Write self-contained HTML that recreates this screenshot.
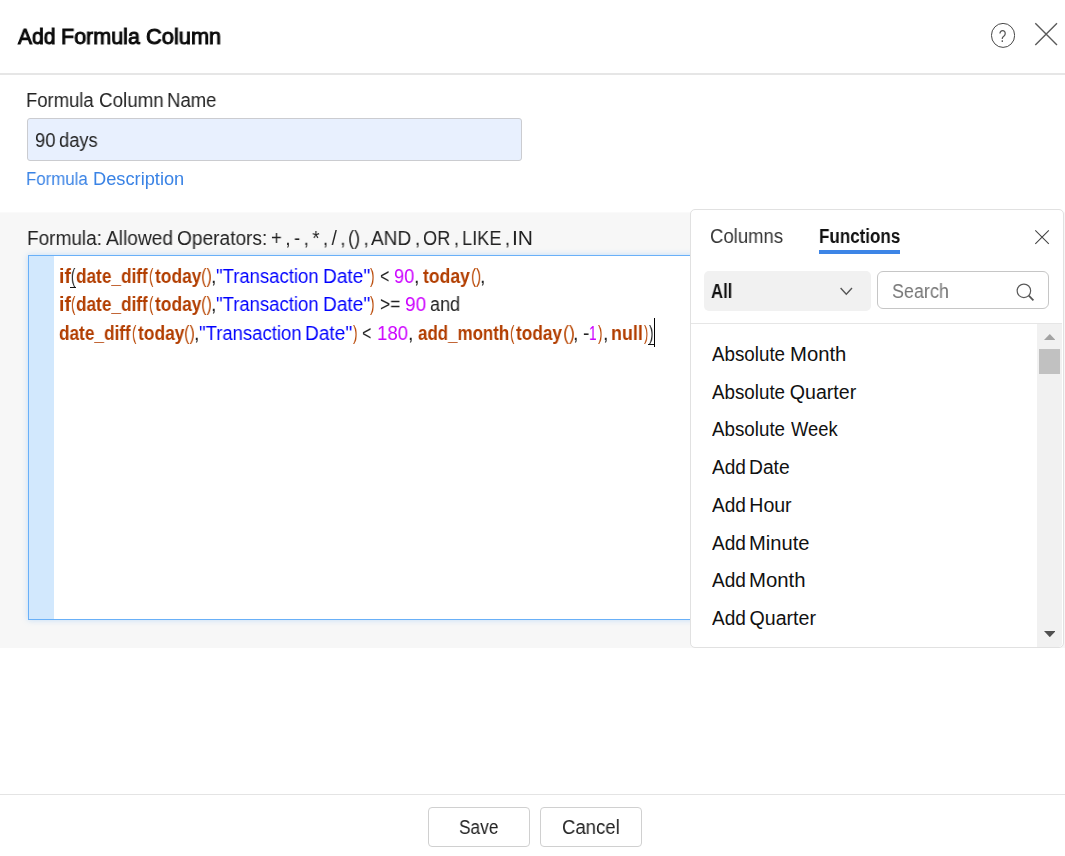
<!DOCTYPE html>
<html lang="en">
<head>
<meta charset="utf-8">
<title>Add Formula Column</title>
<style>
*{box-sizing:border-box;margin:0;padding:0}
html,body{width:1065px;height:856px;overflow:hidden;background:#fff}
body{font-family:"Liberation Sans",sans-serif;color:#222;position:relative}
.t{position:absolute;white-space:pre;line-height:24px;height:24px;transform-origin:0 50%;display:block}
.cline .t{font-size:19.6px}
.gs .t{will-change:transform}
.ck{color:#b23e00;font-weight:bold}
.cp{color:#b84500}
.cs{color:#0000ff}
.cn{color:#cc00ff}
.cd{color:#222}
.cmb{color:#222}
#hdrline{position:absolute;left:0;top:73px;width:1065px;height:2px;background:#e6e6e6}
#help{position:absolute;left:991px;top:23px;width:24px;height:25px;will-change:transform}
#closex{position:absolute;left:1034px;top:22px;width:24px;height:24px}
#inp{position:absolute;left:27px;top:118px;width:495px;height:42.5px;background:#e8f0fe;border:1px solid #cbccd0;border-radius:3px}
#gray{position:absolute;left:0;top:212px;width:1065px;height:436px;background:#f7f7f7;border-top:1px solid #fafafa}
#editor{position:absolute;left:28px;top:255px;width:700px;height:365px;background:#fff;border:1px solid #69b0f8;box-shadow:0 0 6px rgba(105,176,248,.38)}
#gutter{position:absolute;left:0;top:0;width:25px;height:100%;background:#d2e8fd}
#panel{position:absolute;left:690px;top:209px;width:374px;height:439px;background:#fff;border:1px solid #e1e1e1;border-radius:5px}
#tabline{position:absolute;left:819px;top:250px;width:81px;height:4px;background:#3d85e6}
#pclose{position:absolute;left:1034px;top:229px;width:16px;height:16px}
#sel{position:absolute;left:704px;top:271px;width:167px;height:39.5px;background:#f1f1f1;border-radius:5px}
#chev{position:absolute;left:838px;top:285px;width:16px;height:12px}
#search{position:absolute;left:877px;top:271px;width:172px;height:38px;border:1px solid #c6c6c6;border-radius:6px;background:#fff}
#mag{position:absolute;left:1014px;top:281px;width:22px;height:22px}
#sep{position:absolute;left:691px;top:323px;width:371px;height:1px;background:#e6e6e6}
#sbtrack{position:absolute;left:1037px;top:324px;width:25px;height:323px;background:#f1f1f1;border-bottom-right-radius:4px}
#sbthumb{position:absolute;left:1039px;top:349px;width:21px;height:25px;background:#c1c1c1}
#sbup{position:absolute;left:1043.7px;top:334px;width:11.6px;height:6px}
#sbdn{position:absolute;left:1043.7px;top:631px;width:11.6px;height:6.2px}
#ftline{position:absolute;left:0;top:794px;width:1065px;height:1px;background:#e4e4e4}
.btn{position:absolute;top:807px;width:102px;height:40px;border:1px solid #d0d0d0;border-radius:4px;background:#fff}
#mb1{position:absolute;left:70px;top:287px;width:6px;height:1px;background:#111}
#mb2{position:absolute;left:648px;top:344px;width:6px;height:1px;background:#111}
#cursor{position:absolute;left:654px;top:318px;width:1px;height:29px;background:#000}
</style>
</head>
<body>
<svg id="help" viewBox="0 0 24 25"><ellipse cx="12.05" cy="12.4" rx="11.6" ry="12" fill="none" stroke="#333" stroke-width="0.9"/><text transform="translate(11.6 18.9) scale(0.78 1)" text-anchor="middle" font-family="Liberation Sans, sans-serif" font-size="17.4" fill="#555">?</text></svg>
<svg id="closex" viewBox="0 0 24 24"><path d="M1.3 1.3 L23 23 M23 1.3 L1.3 23" stroke="#5a5a5a" stroke-width="1.4" fill="none"/></svg>
<div id="hdrline"></div>
<div id="inp"></div>
<div id="gray"></div>
<div id="editor"><div id="gutter"></div></div>
<div id="panel"></div>
<div id="tabline"></div>
<svg id="pclose" viewBox="0 0 16 16"><path d="M1.3 1.3 L14.8 14.8 M14.8 1.3 L1.3 14.8" stroke="#444" stroke-width="1.1" fill="none"/></svg>
<div id="sel"></div>
<svg id="chev" viewBox="0 0 16 12"><path d="M2.6 3 L8.3 9.3 L14 3" stroke="#555" stroke-width="1.35" fill="none"/></svg>
<div id="search"></div>
<svg id="mag" viewBox="0 0 22 22"><circle cx="9.9" cy="9.8" r="6.75" fill="none" stroke="#5a5a5a" stroke-width="1.2"/><path d="M14.8 14.6 L19.4 19.3" stroke="#555" stroke-width="1.8" fill="none"/></svg>
<div id="sep"></div>
<div id="sbtrack"></div>
<div id="sbthumb"></div>
<svg id="sbup" viewBox="0 0 12 6" preserveAspectRatio="none"><path d="M0 6 L6 0 L12 6 Z" fill="#a3a3a3"/></svg>
<svg id="sbdn" viewBox="0 0 13 6" preserveAspectRatio="none"><path d="M0 0 L13 0 L6.5 6 Z" fill="#505050"/></svg>
<div id="ftline"></div>
<div class="btn" style="left:428px"></div>
<div class="btn" style="left:540px"></div>
<div id="title" class="gs" style="font-size:22.8px;color:#0a0a0a;-webkit-text-stroke:1.03px #0a0a0a;">
<span class="t" style="left:18.37px;top:24.00px;transform:scaleX(0.9203);">Add </span>
<span class="t" style="left:61.10px;top:24.00px;transform:scaleX(0.9433);">Formula </span>
<span class="t" style="left:145.87px;top:24.00px;transform:scaleX(0.9567);">Column</span>
</div>
<div id="lbl1" class="gs" style="font-size:19.6px;color:#222;">
<span class="t" style="left:26.46px;top:88.00px;transform:scaleX(0.9407);">Formula </span>
<span class="t" style="left:98.92px;top:88.00px;transform:scaleX(0.9600);">Column </span>
<span class="t" style="left:167.15px;top:88.00px;transform:scaleX(0.9468);">Name</span>
</div>
<div id="inptxt" class="gs" style="font-size:19.6px;color:#222;">
<span class="t" style="left:35.24px;top:128.00px;transform:scaleX(0.9365);">90 </span>
<span class="t" style="left:59.23px;top:128.00px;transform:scaleX(0.9359);">days</span>
</div>
<div id="desc" class="gs" style="font-size:18px;color:#3a83e5;">
<span class="t" style="left:26.49px;top:167.00px;transform:scaleX(0.9348);">Formula </span>
<span class="t" style="left:93.17px;top:167.00px;transform:scaleX(1.0135);">Description</span>
</div>
<div id="lbl2" class="gs" style="font-size:19.6px;color:#222;">
<span class="t" style="left:27.31px;top:226.00px;transform:scaleX(0.9699);">Formula: </span>
<span class="t" style="left:105.70px;top:226.00px;transform:scaleX(0.9758);">Allowed </span>
<span class="t" style="left:176.80px;top:226.00px;transform:scaleX(0.9755);">Operators: </span>
<span class="t" style="left:270.94px;top:226.00px;word-spacing:-1.67px;transform:scaleX(0.9402);">+ , - , * , / , </span>
<span class="t" style="left:348.15px;top:226.00px;word-spacing:-1.67px;transform:scaleX(0.9298);">() , </span>
<span class="t" style="left:371.30px;top:226.00px;word-spacing:-1.67px;transform:scaleX(0.9706);">AND , </span>
<span class="t" style="left:422.95px;top:226.00px;word-spacing:-1.67px;transform:scaleX(0.9299);">OR , </span>
<span class="t" style="left:461.58px;top:226.00px;word-spacing:-1.67px;transform:scaleX(0.9277);">LIKE , </span>
<span class="t" style="left:512.15px;top:226.00px;transform:scaleX(1.0746);">IN</span>
</div>
<div id="tab1" class="gs" style="font-size:19.6px;color:#333;">
<span class="t" style="left:709.63px;top:224.00px;transform:scaleX(0.9458);">Columns</span>
</div>
<div id="tab2" class="gs" style="font-size:19.6px;color:#111;font-weight:bold;">
<span class="t" style="left:818.94px;top:224.00px;transform:scaleX(0.8677);">Functions</span>
</div>
<div id="seltxt" class="gs" style="font-size:19.6px;color:#111;font-weight:bold;">
<span class="t" style="left:711.24px;top:279.00px;transform:scaleX(0.8524);">All</span>
</div>
<div id="searchtxt" class="gs" style="font-size:19.6px;color:#777;">
<span class="t" style="left:891.94px;top:279.00px;transform:scaleX(0.9157);">Search</span>
</div>
<div id="li1" style="font-size:19.6px;color:#111;">
<span class="t" style="left:711.80px;top:342.00px;transform:scaleX(0.9579);">Absolute </span>
<span class="t" style="left:789.52px;top:342.00px;transform:scaleX(1.0339);">Month</span>
</div>
<div id="li2" style="font-size:19.6px;color:#111;">
<span class="t" style="left:711.80px;top:380.00px;transform:scaleX(0.9579);">Absolute </span>
<span class="t" style="left:789.78px;top:380.00px;letter-spacing:-0.005px;">Quarter</span>
</div>
<div id="li3" style="font-size:19.6px;color:#111;">
<span class="t" style="left:711.80px;top:417.00px;transform:scaleX(0.9579);">Absolute </span>
<span class="t" style="left:791.00px;top:417.00px;transform:scaleX(0.9370);">Week</span>
</div>
<div id="li4" style="font-size:19.6px;color:#111;">
<span class="t" style="left:711.60px;top:455.00px;transform:scaleX(0.9712);">Add </span>
<span class="t" style="left:749.40px;top:455.00px;transform:scaleX(0.9827);">Date</span>
</div>
<div id="li5" style="font-size:19.6px;color:#111;">
<span class="t" style="left:711.60px;top:493.00px;transform:scaleX(0.9712);">Add </span>
<span class="t" style="left:749.37px;top:493.00px;letter-spacing:-0.119px;">Hour</span>
</div>
<div id="li6" style="font-size:19.6px;color:#111;">
<span class="t" style="left:711.60px;top:531.00px;transform:scaleX(0.9712);">Add </span>
<span class="t" style="left:749.33px;top:531.00px;transform:scaleX(1.0283);">Minute</span>
</div>
<div id="li7" style="font-size:19.6px;color:#111;">
<span class="t" style="left:711.60px;top:568.00px;transform:scaleX(0.9712);">Add </span>
<span class="t" style="left:749.31px;top:568.00px;transform:scaleX(1.0378);">Month</span>
</div>
<div id="li8" style="font-size:19.6px;color:#111;">
<span class="t" style="left:711.60px;top:606.00px;transform:scaleX(0.9712);">Add </span>
<span class="t" style="left:749.58px;top:606.00px;letter-spacing:-0.005px;">Quarter</span>
</div>
<div id="bsave" class="gs" style="font-size:19.6px;color:#222;">
<span class="t" style="left:459.06px;top:815.00px;transform:scaleX(0.8829);">Save</span>
</div>
<div id="bcancel" class="gs" style="font-size:19.6px;color:#222;">
<span class="t" style="left:562.43px;top:815.00px;transform:scaleX(0.9456);">Cancel</span>
</div>
<div class="cline gs" id="cl1">
<span class="t ck" style="left:58.59px;top:264.00px;transform:scaleX(0.9856);">if</span>
<span class="t cmb" style="left:71.00px;top:264.00px;transform:scaleX(0.6531);">(</span>
<span class="t ck" style="left:76.46px;top:264.00px;transform:scaleX(0.8785);">date_diff</span>
<span class="t cp" style="left:149.07px;top:264.00px;transform:scaleX(0.6893);">(</span>
<span class="t ck" style="left:154.80px;top:264.00px;transform:scaleX(0.8894);">today</span>
<span class="t cp" style="left:201.33px;top:264.00px;transform:scaleX(0.8363);">()</span>
<span class="t cd" style="left:211.07px;top:264.00px;">,</span>
<span class="t cs" style="left:215.72px;top:264.00px;transform:scaleX(0.9446);">"Transaction </span>
<span class="t cs" style="left:322.61px;top:264.00px;transform:scaleX(0.9740);">Date"</span>
<span class="t cp" style="left:370.20px;top:264.00px;transform:scaleX(0.6893);">)</span>
<span class="t cd" style="left:379.55px;top:264.00px;transform:scaleX(0.8163);">&lt;</span>
<span class="t cn" style="left:394.15px;top:264.00px;transform:scaleX(0.9267);">90</span>
<span class="t cd" style="left:414.27px;top:264.00px;">,</span>
<span class="t ck" style="left:423.30px;top:264.00px;transform:scaleX(0.8970);">today</span>
<span class="t cp" style="left:470.59px;top:264.00px;transform:scaleX(0.7733);">()</span>
<span class="t cd" style="left:480.17px;top:264.00px;">,</span>
</div>
<div class="cline gs" id="cl2">
<span class="t ck" style="left:58.59px;top:292.00px;transform:scaleX(0.9856);">if</span>
<span class="t cp" style="left:70.67px;top:292.00px;transform:scaleX(0.6893);">(</span>
<span class="t ck" style="left:76.46px;top:292.00px;transform:scaleX(0.8785);">date_diff</span>
<span class="t cp" style="left:149.07px;top:292.00px;transform:scaleX(0.6893);">(</span>
<span class="t ck" style="left:154.80px;top:292.00px;transform:scaleX(0.8894);">today</span>
<span class="t cp" style="left:201.33px;top:292.00px;transform:scaleX(0.8363);">()</span>
<span class="t cd" style="left:211.07px;top:292.00px;">,</span>
<span class="t cs" style="left:215.72px;top:292.00px;transform:scaleX(0.9446);">"Transaction </span>
<span class="t cs" style="left:322.61px;top:292.00px;transform:scaleX(0.9740);">Date"</span>
<span class="t cp" style="left:370.20px;top:292.00px;transform:scaleX(0.6893);">)</span>
<span class="t cd" style="left:379.89px;top:292.00px;transform:scaleX(0.8849);">&gt;=</span>
<span class="t cn" style="left:404.91px;top:292.00px;transform:scaleX(0.9660);">90</span>
<span class="t cd" style="left:430.44px;top:292.00px;transform:scaleX(0.9197);">and</span>
</div>
<div class="cline gs" id="cl3">
<span class="t ck" style="left:59.26px;top:321.00px;transform:scaleX(0.8785);">date_diff</span>
<span class="t cp" style="left:131.87px;top:321.00px;transform:scaleX(0.6893);">(</span>
<span class="t ck" style="left:137.60px;top:321.00px;transform:scaleX(0.8894);">today</span>
<span class="t cp" style="left:184.13px;top:321.00px;transform:scaleX(0.8363);">()</span>
<span class="t cd" style="left:193.87px;top:321.00px;">,</span>
<span class="t cs" style="left:198.52px;top:321.00px;transform:scaleX(0.9446);">"Transaction </span>
<span class="t cs" style="left:305.41px;top:321.00px;transform:scaleX(0.9740);">Date"</span>
<span class="t cp" style="left:353.00px;top:321.00px;transform:scaleX(0.6893);">)</span>
<span class="t cd" style="left:362.45px;top:321.00px;transform:scaleX(0.8163);">&lt;</span>
<span class="t cn" style="left:377.44px;top:321.00px;transform:scaleX(0.9487);">180</span>
<span class="t cd" style="left:408.07px;top:321.00px;">,</span>
<span class="t ck" style="left:418.04px;top:321.00px;transform:scaleX(0.8643);">add_month</span>
<span class="t cp" style="left:510.17px;top:321.00px;transform:scaleX(0.6893);">(</span>
<span class="t ck" style="left:516.10px;top:321.00px;transform:scaleX(0.8817);">today</span>
<span class="t cp" style="left:562.66px;top:321.00px;transform:scaleX(0.9172);">()</span>
<span class="t cd" style="left:573.47px;top:321.00px;">,</span>
<span class="t cd" style="left:582.51px;top:321.00px;transform:scaleX(0.9604);">-</span>
<span class="t cn" style="left:589.36px;top:321.00px;transform:scaleX(0.6868);">1</span>
<span class="t cp" style="left:597.80px;top:321.00px;transform:scaleX(0.6893);">)</span>
<span class="t cd" style="left:602.57px;top:321.00px;">,</span>
<span class="t ck" style="left:611.38px;top:321.00px;transform:scaleX(0.9121);">null</span>
<span class="t cp" style="left:643.50px;top:321.00px;transform:scaleX(0.6531);">)</span>
<span class="t cmb" style="left:648.90px;top:321.00px;transform:scaleX(0.6893);">)</span>
</div>
<div id="mb1"></div>
<div id="mb2"></div>
<div id="cursor"></div>
</body>
</html>
